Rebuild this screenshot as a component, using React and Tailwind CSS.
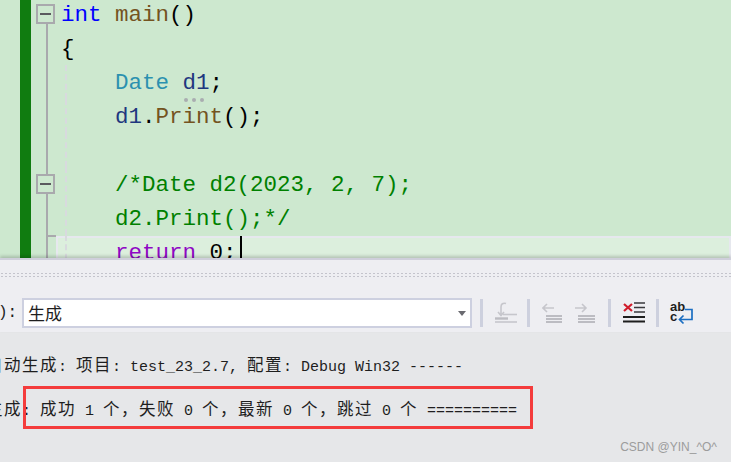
const MONO = "font-['Liberation_Mono','Noto_Sans_CJK_SC',monospace]";

// CJK glyphs are twice as wide as the latin ones in the output pane
function Mixed({ text }) {
  return text.split(/([\u3000-\u9fff\uff00-\uffef]+)/).map((part, i) =>
    i % 2 === 1 ? (
      <span key={i} className="font-['Noto_Sans_CJK_SC',monospace] text-[16.5px] tracking-[1.5px]">{part}</span>
    ) : (
      <span key={i}>{part}</span>
    )
  );
}

function FoldBox() {
  return (
    <div className="relative z-10 w-[19px] h-[20px] border-[2px] border-[#a9a9ad] bg-[#cde8cf] flex items-center justify-center">
      <div className="w-[11px] h-[2px] bg-[#5a5a5e]" />
    </div>
  );
}

function Row({ fold, guide = true, children }) {
  return (
    <div className="flex h-[34px]">
      <div className="relative w-[30px] shrink-0 flex items-center pl-[5px]">
        {fold === "box" && <FoldBox />}
        {fold !== "first" && (
          <div className="absolute left-[15px] top-0 bottom-0 w-[2px] bg-[#a9a9ad]" />
        )}
        {fold === "first" && (
          <>
            <FoldBox />
            <div className="absolute left-[15px] top-[27px] bottom-0 w-[2px] bg-[#a9a9ad]" />
          </>
        )}
        {fold === "end" && (
          <div className="absolute left-[15px] top-0 w-[10px] h-[2px] bg-[#a9a9ad]" />
        )}
      </div>
      <div className="relative flex-1">
        {guide && (
          <div className="absolute left-[4px] top-0 bottom-0 border-l-2 border-dashed border-[#d8dade]" />
        )}
        <div className={`${MONO} relative top-[1px] text-[22.5px] leading-[34px] whitespace-pre`}>{children}</div>
      </div>
    </div>
  );
}

function Sep() {
  return <div className="w-[3px] h-[28px] bg-[#cdd0de]" />;
}

function ToolIcon({ children, w = 22 }) {
  return (
    <svg width={w} height="28" viewBox={`0 0 ${w} 28`} fill="none" className="shrink-0">
      {children}
    </svg>
  );
}

export default function App() {
  return (
    <div className="w-[731px] h-[462px] overflow-hidden flex flex-col bg-[#e6e7e9]">
      {/* editor */}
      <div className="h-[258px] shrink-0 overflow-hidden bg-[#cde8cf] flex">
        <div className="w-[20px] shrink-0" />
        <div className="w-[11px] shrink-0 bg-[#107c10]" />
        <div className="flex-1 -mt-[3px]">
          <Row fold="first" guide={false}>
            <span className="text-[#0000ff]">int</span> <span className="text-[#74531f]">main</span>()
          </Row>
          <Row fold="line" guide={false}>{"{"}</Row>
          <Row fold="line">
            {"    "}<span className="text-[#2b91af]">Date</span>{" "}
            <span className="relative text-[#1f377f]">
              d1
              <span className="absolute left-[1px] top-[28px] flex gap-[4px]">
                <span className="w-[4px] h-[4px] rounded-full bg-[#a9adb0]" />
                <span className="w-[4px] h-[4px] rounded-full bg-[#a9adb0]" />
                <span className="w-[4px] h-[4px] rounded-full bg-[#a9adb0]" />
              </span>
            </span>;
          </Row>
          <Row fold="line">
            {"    "}<span className="text-[#1f377f]">d1</span>.<span className="text-[#74531f]">Print</span>();
          </Row>
          <Row fold="line"> </Row>
          <Row fold="box">
            {"    "}<span className="text-[#008000]">/*Date d2(2023, 2, 7);</span>
          </Row>
          <Row fold="line">
            {"    "}<span className="text-[#008000]">d2.Print();*/</span>
          </Row>
          <div className="relative">
            <div className="absolute left-[25px] right-0 top-[1px] h-[40px] border-2 border-[#e6e8ee] bg-[#dcefdd]" />
            <Row fold="end">
              {"    "}<span className="text-[#8f08c4]">return</span> 0;
              <span className="absolute left-[179px] top-0 w-[2px] h-[24px] bg-black" />
            </Row>
          </div>
        </div>
      </div>

      {/* toolbar */}
      <div className="h-[74px] shrink-0 bg-[#eeeef2] border-t-2 border-[#cfcfdb] relative shadow-[0_-2px_3px_rgba(0,0,0,0.18)]">
        <div className="mt-[12px] h-[6px] bg-[radial-gradient(#c4c4cc_1px,transparent_1px)] bg-[length:4px_3px]" />
        <div className="mt-[20px] flex items-center h-[30px]">
          <span className="font-['Liberation_Mono',monospace] text-[16px] text-[#1e1e1e] w-[22px] -ml-[2px] mr-[2px] shrink-0 whitespace-pre">):</span>
          <div className="w-[450px] h-[30px] border-2 border-[#cdd0e0] bg-white flex items-center justify-between pl-[4px] pr-[4px]">
            <span className="font-['Noto_Sans_CJK_SC',sans-serif] text-[17px] text-[#1e1e1e]">生成</span>
            <span className="w-0 h-0 border-x-[4px] border-x-transparent border-t-[5px] border-t-[#6a6a70]" />
          </div>
          <div className="ml-[8px]"><Sep /></div>
          {/* go to build output line */}
          <div className="ml-[12px]">
            <ToolIcon>
              <path d="M11 4.5 C8 3.5 6 5 6 8 V16 M3 13 L6 16.5 L9 13" stroke="#c6c6cc" strokeWidth="1.6" />
              <path d="M8 15.5 H22" stroke="#c6c6cc" strokeWidth="1.6" />
              <path d="M0 19.5 H13" stroke="#bcbcc2" strokeWidth="2.4" />
              <path d="M0 23 H22" stroke="#c6c6cc" strokeWidth="1.6" />
            </ToolIcon>
          </div>
          <div className="ml-[10px]"><Sep /></div>
          {/* previous message */}
          <div className="ml-[12px]">
            <ToolIcon w={20}>
              <path d="M1 9 H12 M5 5 L1 9 L5 13" stroke="#c6c6cc" strokeWidth="1.6" />
              <path d="M4 17 H20 M4 20 H20 M4 23 H20" stroke="#bcbcc2" strokeWidth="2" />
            </ToolIcon>
          </div>
          {/* next message */}
          <div className="ml-[13px]">
            <ToolIcon w={20}>
              <path d="M0 9 H11 M7 5 L11 9 L7 13" stroke="#c6c6cc" strokeWidth="1.6" />
              <path d="M3 17 H20 M3 20 H20 M3 23 H20" stroke="#bcbcc2" strokeWidth="2" />
            </ToolIcon>
          </div>
          <div className="ml-[13px]"><Sep /></div>
          {/* clear all */}
          <div className="ml-[12px]">
            <ToolIcon>
              <path d="M1 5 L9 12 M9 5 L1 12" stroke="#d01c2c" strokeWidth="2.2" />
              <path d="M11 4 H22 M11 8.5 H22 M11 13 H22" stroke="#3a3a3e" strokeWidth="1.5" />
              <path d="M0 18 H22 M0 22.5 H22" stroke="#1e1e1e" strokeWidth="1.8" />
            </ToolIcon>
          </div>
          <div className="ml-[11px]"><Sep /></div>
          {/* word wrap */}
          <div className="ml-[11px] w-[24px] h-[28px] flex gap-[1px]">
            <div className="w-[15px] pt-[3px] font-['Liberation_Sans',sans-serif] font-bold text-[13px] leading-[10px] text-[#1e1e1e]">
              <div>ab</div>
              <div>c</div>
            </div>
            <svg width="8" height="28" viewBox="0 0 8 28" fill="none" className="shrink-0 overflow-visible">
              <path d="M-1 10.5 H6 V20.5 H-6 M-2.5 16.5 L-6.5 20.5 L-2.5 24.5" stroke="#1b6ec2" strokeWidth="1.7" />
            </svg>
          </div>
        </div>
      </div>

      {/* output */}
      <div className={`${MONO} relative flex-1 text-[15px] text-[#1e1e1e] whitespace-pre`}>
        <div className="h-[24px] mt-[20px] leading-[24px] -ml-[14px]">
          <Mixed text="自动生成: 项目: test_23_2.7, 配置: Debug Win32 ------" />
        </div>
        <div className="h-[24px] mt-[20px] leading-[24px] -ml-[14px]">
          <Mixed text="生成: 成功 1 个，失败 0 个，最新 0 个，跳过 0 个 ==========" />
        </div>
        <div className="absolute left-[23px] top-[54px] w-[510px] h-[43px] border-[3px] border-[#f43c3c]" />
        <div className="absolute right-[14px] top-[107px] font-['Liberation_Sans',sans-serif] text-[12px] leading-[16px] text-[#9c9c9c]">
          CSDN @YIN_^O^
        </div>
      </div>
    </div>
  );
}
